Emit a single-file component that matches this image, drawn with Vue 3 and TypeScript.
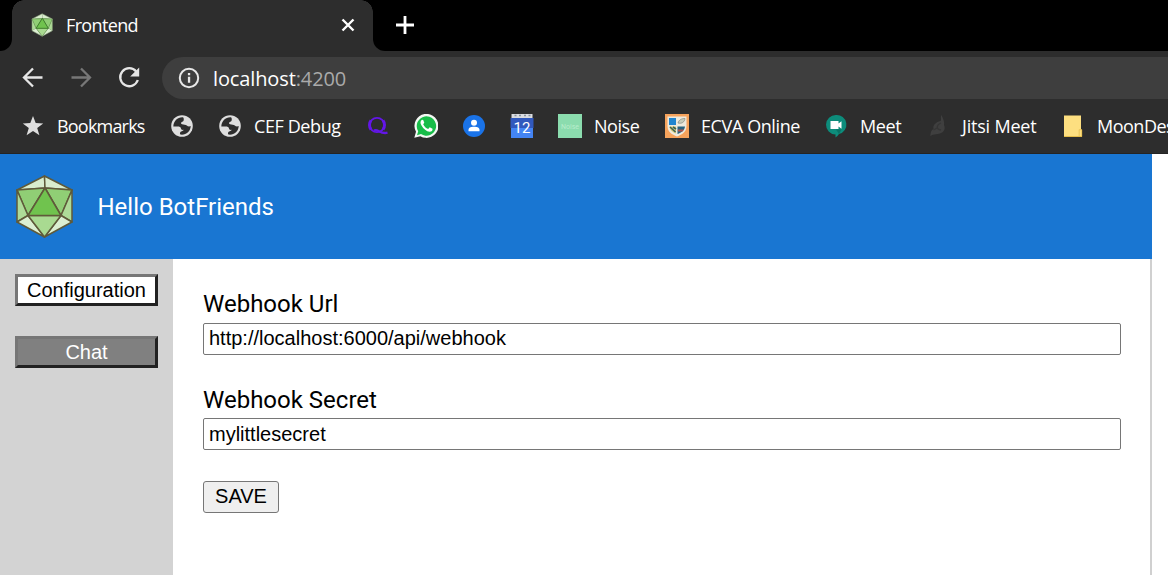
<script setup lang="ts">
import { ref } from 'vue'

interface Bookmark {
  id: string
  icon: string
  label?: string
}

interface Face {
  points: string
  fill: string
}

const bookmarks: Bookmark[] = [
  { id: 'star', icon: 'star', label: 'Bookmarks' },
  { id: 'globe', icon: 'globe' },
  { id: 'cef', icon: 'globe', label: 'CEF Debug' },
  { id: 'q', icon: 'q' },
  { id: 'whatsapp', icon: 'whatsapp' },
  { id: 'contacts', icon: 'contacts' },
  { id: 'calendar', icon: 'calendar' },
  { id: 'noise', icon: 'noise', label: 'Noise' },
  { id: 'ecva', icon: 'ecva', label: 'ECVA Online' },
  { id: 'meet', icon: 'meet', label: 'Meet' },
  { id: 'jitsi', icon: 'jitsi', label: 'Jitsi Meet' },
  { id: 'moon', icon: 'folder', label: 'MoonDes' },
]

const faces: Face[] = [
  { points: '30.500,2 3,16 31,14', fill: '#d9edce' },
  { points: '30.500,2 58,16 31,14', fill: '#d9edce' },
  { points: '3,16 31,14 14,41.5', fill: '#90ce75' },
  { points: '58,16 31,14 47,41.5', fill: '#90ce75' },
  { points: '3,16 14,41.5 3,48', fill: '#aedb98' },
  { points: '58,16 47,41.5 58,48', fill: '#aedb98' },
  { points: '3,48 14,41.5 30.500,63', fill: '#dcefd2' },
  { points: '58,48 47,41.5 30.500,63', fill: '#dcefd2' },
  { points: '14,41.5 47,41.5 30.500,63', fill: '#a9da91' },
  { points: '31,14 14,41.5 47,41.5', fill: '#70c34e' },
]

const webhookUrl = ref('http://localhost:6000/api/webhook')
const webhookSecret = ref('mylittlesecret')
</script>

<template>
  <div class="window">
    <div class="tabstrip">
      <div class="strip-start"></div>
      <div class="tab">
        <svg class="tab-logo" viewBox="0 0 60 65">
          <polygon v-for="f in faces" :key="f.points" :points="f.points" :fill="f.fill" />
          <path d="M3 16H58M3 16 14 41.500 30.500 63 47 41.500 58 16" fill="none" stroke="#6a9c54" stroke-width="1.500" />
          <path d="M31 14 14 41.5H47Z" fill="none" stroke="#3f7f2b" stroke-width="2.5" />
          <path d="M30.500 2 58 16V48L30.500 63 3 48V16Z" fill="none" stroke="#8aa37c" stroke-width="1.5" />
        </svg>
        <span class="tab-title">Frontend</span>
        <svg class="tab-close" viewBox="0 0 14 14"><path d="M1.5 1.5 12.5 12.5M12.5 1.5 1.5 12.5" /></svg>
      </div>
      <div class="strip-end">
        <svg class="new-tab" viewBox="0 0 18 18"><path d="M9 0V18M0 9H18" /></svg>
      </div>
    </div>

    <div class="toolbar">
      <svg class="nav" viewBox="0 0 24 24"><path d="M21.5 11.500H3.5M12 2.500 3 11.500 12 20.500" /></svg>
      <svg class="nav dim" viewBox="0 0 24 24"><path d="M2.5 11.500H20.5M12 2.500 21 11.500 12 20.500" /></svg>
      <svg class="nav" viewBox="0 0 24 24">
        <path d="M19.2 5.500A9 9 0 1 0 20.8 14" />
        <path class="solid" d="M22.2 1.500V10.500H13.2Z" />
      </svg>
      <div class="omnibox">
        <svg class="info" viewBox="0 0 22 22">
          <circle cx="11" cy="11" r="9.2" fill="none" stroke="#e8e8e8" stroke-width="2" />
          <path d="M9.9 9.8h2.3v6H9.9zM9.9 6h2.3v2.2H9.9z" fill="#e8e8e8" />
        </svg>
        <span class="host">localhost</span><span class="port">:4200</span>
      </div>
    </div>

    <div class="bookmarks">
      <div v-for="b in bookmarks" :key="b.id" class="bookmark">
        <svg class="bm-icon" viewBox="0 0 24 24">
          <path
            v-if="b.icon === 'star'"
            fill="#dedede"
            d="M12 2 14.700 9.100 22.200 9.400 16.200 14 18.400 21.200 12 17 5.600 21.200 7.800 14 1.800 9.400 9.300 9.100Z"
          />
          <g v-else-if="b.icon === 'globe'">
            <circle cx="12" cy="12" r="10.8" fill="#dedede" />
            <path
              fill="#2d2d2d"
              d="M13.300 3.400C8 2.800 3.600 6.800 3.300 12.500H7.500C9.500 12.500 10.800 13 11 14.500C11.200 15.800 12.300 16.200 13.500 15.800C13.700 17.300 11.300 16.800 10.300 18.200C9.700 19.200 10 20.200 10.500 20.600C16 21.300 20.600 17.300 20.700 12C19.500 12.800 17.800 12.600 16.800 11.500C15.800 10.500 13.500 11 12 10.300C10.600 9.600 10.800 8 12.300 7.700C13.800 7.200 14.300 5.200 13.300 3.400Z"
            />
          </g>
          <g v-else-if="b.icon === 'q'" fill="none" stroke="#6316e8">
            <ellipse cx="11" cy="11" rx="7.300" ry="7.200" stroke-width="1.800" />
            <path d="M5 6.500C3 9 3 13 5 15.500M17 6.500C19 9 19 13 17 15.500" stroke-width="3" />
            <path d="M8 16.500C12 14.500 14 20.500 21.500 18.700" stroke-width="2.300" />
          </g>
          <g v-else-if="b.icon === 'whatsapp'">
            <path d="M.3 23.800 2 17.800A12 12 0 1 1 6.300 22.200Z" fill="#f4f8f4" />
            <path d="M3 21.200 4.200 17.200A9.700 9.700 0 1 1 7 20.100Z" fill="#18bd49" />
            <path
              fill="#fff"
              d="M8 5.800C6.200 7 6 9.200 7.500 11.500C9.500 15 12.500 17.500 15.500 17.800C17.600 17.900 18.800 16.500 18.500 14.700L15.700 13.300 14.200 15C11.800 14 10.300 12.500 9.200 10.200L10.300 8.800 9.200 6Z"
            />
          </g>
          <g v-else-if="b.icon === 'contacts'">
            <circle cx="12" cy="12" r="11" fill="#1a73e8" />
            <circle cx="12" cy="8.700" r="3" fill="#fff" />
            <path d="M6.500 17.200V16C6.500 13.500 9 12.800 12 12.800S17.500 13.500 17.500 16V17.200Z" fill="#fff" />
          </g>
          <g v-else-if="b.icon === 'calendar'">
            <path d="M1.500 0H22.500V4H1.500Z" fill="#dadce0" />
            <path d="M4.500 1.500h2M9 1.500h2M14 1.500h2M18.500 1.500h2" stroke="#88909c" stroke-width="1.500" />
            <path d="M.5 4H23.500V14H.5Z" fill="#3159bd" />
            <path d="M1 14H23V24H1Z" fill="#4384f3" />
            <text x="12" y="19" text-anchor="middle" class="cal-day">12</text>
          </g>
          <g v-else-if="b.icon === 'noise'">
            <rect width="24" height="24" fill="#8bdcae" />
            <text x="12" y="14.500" text-anchor="middle" class="noise-text">Noise</text>
          </g>
          <g v-else-if="b.icon === 'ecva'">
            <rect width="24" height="24" fill="#f6a35c" />
            <path d="M2.500 2.500H21.500V12C21.500 18 17 20.500 12 22.500C7 20.500 2.500 18 2.500 12Z" fill="#eeeadd" />
            <path d="M4 4H11V11H4Z" fill="#2085cf" />
            <path d="M13 9C14 5.500 17 4.500 20 4.500C19.500 8 17 10 13 9Z" fill="#c9cdbb" stroke="#8b9188" stroke-width=".8" />
            <path d="M4.500 12.500H11V19.500C7 18 4.700 16 4.500 12.500Z" fill="#d8ca75" />
            <path d="M5 13 10.500 18M8 13 11 15" stroke="#3b6256" stroke-width="1.600" />
            <path d="M12.500 12.500H20C19.500 16.500 16.500 18.700 12.500 20Z" fill="#29627e" />
            <path d="M13 15.500H19L17.500 17.500H13Z" fill="#b2524b" />
          </g>
          <g v-else-if="b.icon === 'meet'">
            <path d="M12 1A9.700 9.700 0 0 1 15 20.100Q14 22 11.500 23.500V20.500A9.750 9.750 0 0 1 12 1Z" fill="#0d8c7b" />
            <path d="M12 15.500H17.500L15 20Z" fill="#0b7265" />
            <path d="M6.500 7H14.500V9.600L17.500 7.300V14.700L14.500 12.500V15H6.500Z" fill="#fff" />
          </g>
          <g v-else-if="b.icon === 'jitsi'">
            <path
              fill="#3f3f3f"
              d="M15.500 1C14 4 15.800 5.500 14.500 7C10 8 6.500 11 7.500 15C5 16 4.500 19 4.300 22C7 20.500 9 20.200 12 20C17.500 19 20 15.500 18 11C18.500 8.500 18 6.500 15.500 1Z"
            />
            <path d="M15 9C10 11 10 15 15 16M7.500 16 11 14" fill="none" stroke="#353535" stroke-width="1.300" />
          </g>
          <g v-else>
            <path d="M3 1.500H20V15.500H21V22.500H3Z" fill="#fddf80" />
            <path d="M3 22H21V23H3Z" fill="#e5bd4a" />
            <path d="M20.700 15.700H18.200V22M20.700 15.700V22.500" fill="none" stroke="#e3bd4c" stroke-width=".8" />
          </g>
        </svg>
        <span v-if="b.label" class="bm-label" :class="b.id">{{ b.label }}</span>
      </div>
    </div>

    <div class="page">
      <div class="app">
        <header class="header">
          <svg class="logo" viewBox="0 0 60 65">
            <g stroke="#5f5a3a" stroke-width="1.500" stroke-linejoin="round">
              <polygon v-for="f in faces" :key="f.points" :points="f.points" :fill="f.fill" />
            </g>
          </svg>
          <h1>Hello BotFriends</h1>
        </header>
        <div class="body">
          <nav class="side">
            <button class="side-btn active">Configuration</button>
            <button class="side-btn">Chat</button>
          </nav>
          <main class="content">
            <label for="url">Webhook Url</label>
            <input id="url" v-model="webhookUrl" type="text" spellcheck="false" />
            <label for="secret">Webhook Secret</label>
            <input id="secret" v-model="webhookSecret" type="text" spellcheck="false" />
            <button class="save">SAVE</button>
          </main>
        </div>
      </div>
    </div>
  </div>
</template>

<style>
body {
  margin: 0;
  overflow: hidden;
}
</style>

<style scoped>
* {
  box-sizing: border-box;
}
.window {
  width: 1168px;
  height: 575px;
  display: flex;
  flex-direction: column;
  overflow: hidden;
  background: #2d2d2d;
  font-family: "Open Sans", "Noto Sans", sans-serif;
}
.window svg {
  flex: none;
  display: block;
}
.tabstrip {
  height: 51px;
  display: flex;
  flex: none;
}
.strip-start {
  width: 12px;
  background: #000;
  border-bottom-right-radius: 12px;
}
.tab {
  width: 361px;
  display: flex;
  align-items: center;
  padding: 0 18px 2px;
  background: #2d2d2d;
  position: relative;
}
.tab::before,
.tab::after {
  content: "";
  position: absolute;
  top: 0;
  width: 12px;
  height: 12px;
}
.tab::before {
  left: 0;
  background: radial-gradient(circle at 100% 100%, #2d2d2d 11.5px, #000 12px);
}
.tab::after {
  right: 0;
  background: radial-gradient(circle at 0 100%, #2d2d2d 11.5px, #000 12px);
}
.tab-logo {
  width: 24px;
  height: 24px;
}
.tab-title {
  margin-left: 12px;
  font-size: 18px;
  letter-spacing: -0.65px;
  line-height: 24px;
  color: #fff;
}
.tab-close {
  width: 14px;
  height: 14px;
  margin-left: auto;
  fill: none;
  stroke: #fff;
  stroke-width: 2.4;
}
.strip-end {
  flex: 1;
  background: #000;
  border-bottom-left-radius: 12px;
  display: flex;
  align-items: center;
  padding: 0 0 1px 23px;
}
.new-tab {
  width: 18px;
  height: 18px;
  stroke: #fff;
  stroke-width: 2.8;
}
.toolbar {
  height: 54px;
  flex: none;
  display: flex;
  align-items: center;
  gap: 24px;
  padding-left: 21px;
}
.nav {
  width: 24px;
  height: 24px;
  fill: none;
  stroke: #e6e6e6;
  stroke-width: 2.3;
}
.nav.dim {
  stroke: #777;
}
.nav .solid {
  fill: #e6e6e6;
  stroke: none;
}
.omnibox {
  flex: 1;
  height: 42px;
  margin-left: -3px;
  padding-left: 16px;
  display: flex;
  align-items: center;
  border-radius: 21px 0 0 21px;
  background: #3e3e3e;
  font-size: 20px;
  letter-spacing: -0.12px;
}
.info {
  width: 22px;
  height: 22px;
  margin-right: 13px;
}
.host {
  color: #fff;
}
.port {
  color: #aaa;
}
.bookmarks {
  height: 49px;
  flex: none;
  display: flex;
  gap: 24px;
  padding: 9px 0 0 21px;
  overflow: hidden;
  border-bottom: 1px solid #242424;
}
.bookmark {
  display: flex;
  flex: none;
  gap: 12px;
  height: 24px;
  align-items: center;
}
.bm-icon {
  width: 24px;
  height: 24px;
}
.bm-label {
  font-size: 18px;
  line-height: 24px;
  letter-spacing: -0.4px;
  white-space: nowrap;
  color: #fff;
}
.bm-label.star { width: 89px; letter-spacing: -0.8px; }
.bm-label.cef { width: 88px; }
.bm-label.noise { width: 47px; letter-spacing: -0.45px; }
.bm-label.ecva { width: 99px; }
.bm-label.meet { width: 42px; }
.bm-label.jitsi { width: 75px; letter-spacing: -0.2px; }
.bm-label.moon { letter-spacing: -0.5px; }
.cal-day {
  font: 15px Roboto, sans-serif;
  fill: #fff;
}
.noise-text {
  font: 7px Roboto, sans-serif;
  fill: #b7edcb;
}
.page {
  flex: 1;
  background: #fff;
}
.app {
  width: 1152px;
  height: 100%;
  display: flex;
  flex-direction: column;
}
.header {
  height: 105px;
  flex: none;
  display: flex;
  align-items: center;
  padding-left: 14px;
  background: #1976d2;
}
.logo {
  width: 60px;
  height: 65px;
}
h1 {
  margin: 0 0 0 23.5px;
  font: 400 24px/30px Roboto, sans-serif;
  color: #fff;
}
.body {
  flex: 1;
  display: flex;
  border-right: 2px solid #d0d0d0;
}
.side {
  width: 173px;
  padding: 15px;
  display: flex;
  flex-direction: column;
  gap: 30px;
  background: #d3d3d3;
}
.side-btn {
  height: 32px;
  padding: 0;
  border: 3px solid;
  border-color: #767676 #212121 #212121 #767676;
  border-radius: 0;
  background: #808080;
  color: #fff;
  font: 20px/24px "Liberation Sans", Arial, sans-serif;
}
.side-btn.active {
  background: #fff;
  color: #000;
}
.content {
  flex: 1;
  display: flex;
  flex-direction: column;
  align-items: flex-start;
  padding: 31px 29px 0 30px;
}
label {
  height: 28px;
  margin-bottom: 5px;
  font: 24px/28px Roboto, sans-serif;
  color: #000;
}
label[for="secret"] {
  margin-bottom: 4px;
}
input {
  width: 100%;
  height: 32px;
  margin: 0 0 31px;
  padding: 0 5px 2px;
  border: 1px solid #767676;
  border-radius: 2px;
  background: #fff;
  color: #000;
  font: 20px "Liberation Sans", Arial, sans-serif;
  outline: none;
}
#secret {
  padding-bottom: 0;
}
.save {
  width: 76px;
  height: 32px;
  padding: 0 0 2px;
  border: 1px solid #767676;
  border-radius: 3px;
  background: #efefef;
  color: #000;
  font: 20px "Liberation Sans", Arial, sans-serif;
}
</style>
